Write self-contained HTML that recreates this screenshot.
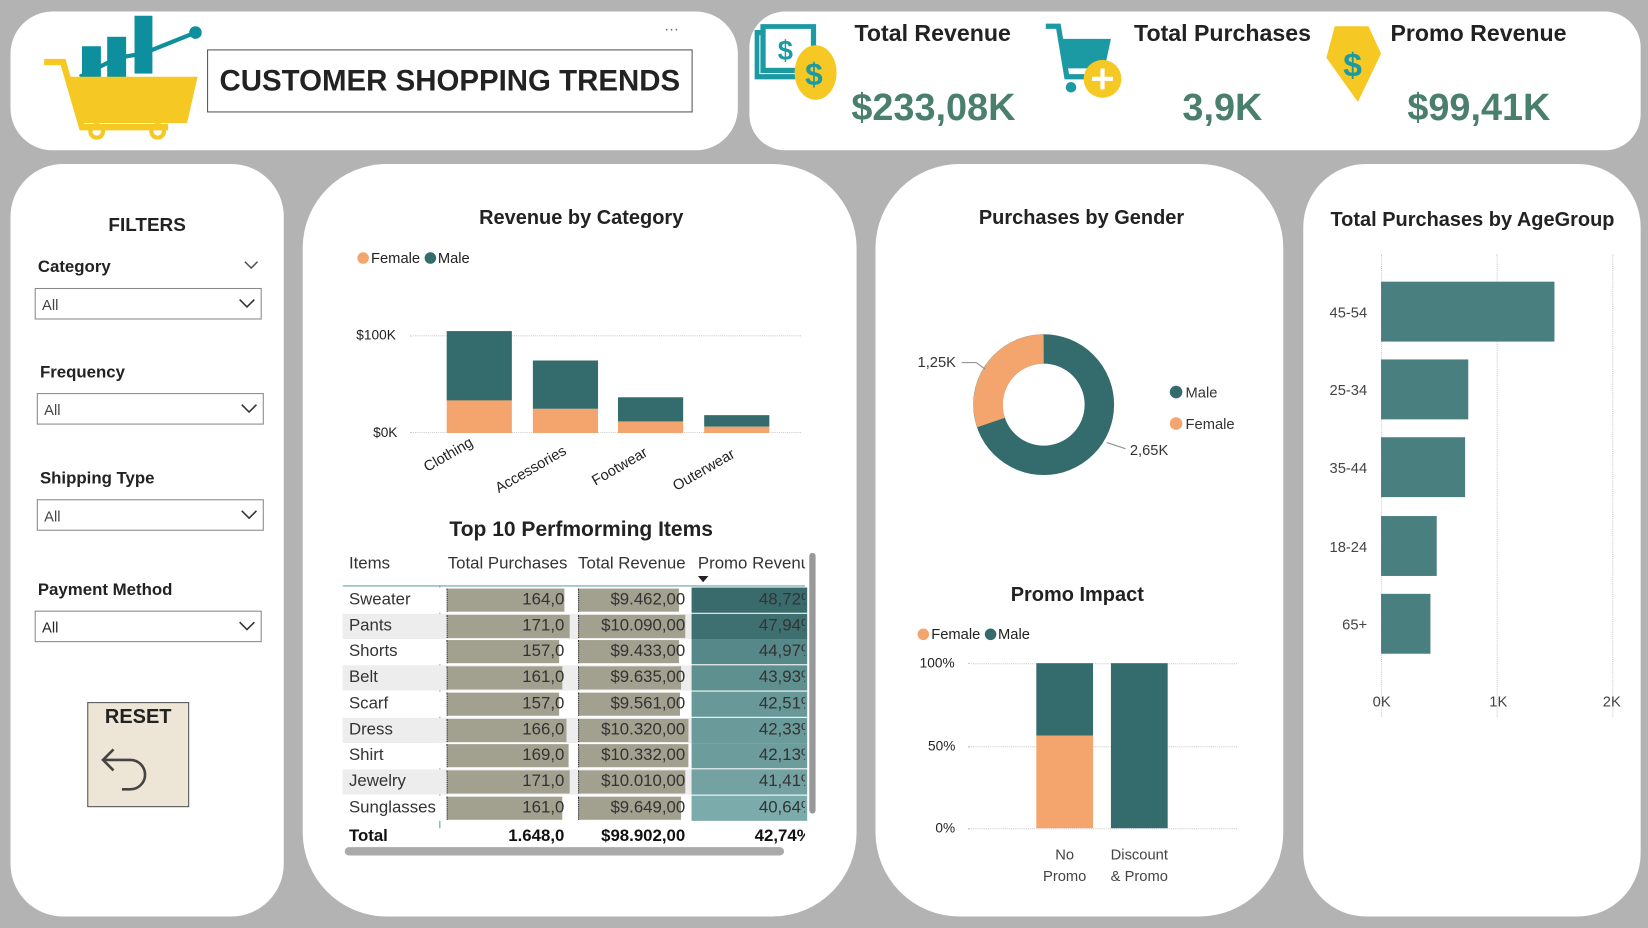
<!DOCTYPE html>
<html><head><meta charset="utf-8"><style>
*{margin:0;padding:0;box-sizing:border-box}
html,body{width:1648px;height:928px;overflow:hidden;background:#b3b3b3}
#w{position:absolute;left:0;top:0;width:1568px;height:883px;transform:scale(1.05102);transform-origin:0 0;font-family:"Liberation Sans","DejaVu Sans",sans-serif;color:#222}
.p{position:absolute;background:#fff}
.a{position:absolute}
.b{font-weight:bold}
.t{font-family:"Liberation Sans","DejaVu Sans",sans-serif;white-space:nowrap}
.sel{position:absolute;left:23px;width:216px;height:30px;border:1px solid #888;font-size:14px;color:#444;padding:7px 6px}
.sel svg{position:absolute;right:5px;top:9px}
.flab{position:absolute;font-size:16px;font-weight:bold}
.dot{display:inline-block;width:11px;height:11px;border-radius:50%;vertical-align:-1px;margin-right:2px}
</style></head><body><div id="w">

<!-- header -->
<div class="p" style="left:10px;top:11px;width:692px;height:132px;border-radius:40px">
  <svg class="a" style="left:30px;top:2px" width="152" height="120" viewBox="0 0 152 120">
    <rect x="38" y="31" width="18" height="40" fill="#0e8f9e"/>
    <rect x="62" y="22" width="18" height="40" fill="#0e8f9e"/>
    <rect x="88" y="2" width="17" height="55" fill="#0e8f9e"/>
    <polyline points="36,60 72,42 96,38 146,18" fill="none" stroke="#0e8f9e" stroke-width="4"/>
    <circle cx="72" cy="42" r="5" fill="#0e8f9e"/><circle cx="96" cy="38" r="5" fill="#0e8f9e"/><circle cx="146" cy="18" r="6" fill="#0e8f9e"/>
    <path d="M2 46 H20 L38 108 H120" fill="none" stroke="#f5c823" stroke-width="6"/>
    <polygon points="26,60 148,60 138,104 36,104" fill="#f5c823"/>
    <circle cx="52" cy="112" r="6" fill="none" stroke="#f5c823" stroke-width="4"/>
    <circle cx="110" cy="112" r="6" fill="none" stroke="#f5c823" stroke-width="4"/>
  </svg>
  <div class="a t b" style="left:187px;top:36px;width:462px;height:60px;border:1px solid #555;font-size:28px;text-align:center;line-height:58px;color:#222">CUSTOMER SHOPPING TRENDS</div>
  <div class="a" style="left:622px;top:8px;font-size:14px;color:#666">···</div>
</div>

<!-- KPIs -->
<div class="p" style="left:713px;top:11px;width:848px;height:132px;border-radius:34px">
  <svg class="a" style="left:5px;top:12px" width="80" height="75" viewBox="0 0 80 75">
    <rect x="2" y="8" width="48" height="42" fill="none" stroke="#1b9aa4" stroke-width="5"/>
    <rect x="8" y="2" width="48" height="42" fill="#fff" stroke="#1b9aa4" stroke-width="5"/>
    <text x="22" y="34" font-size="26" font-weight="bold" fill="#1b9aa4">$</text>
    <ellipse cx="58" cy="46" rx="20" ry="26" fill="#f5c823"/>
    <text x="48" y="58" font-size="30" font-weight="bold" fill="#1b9aa4">$</text>
  </svg>
  <div class="a t b" style="left:100px;top:8px;font-size:22px">Total Revenue</div>
  <div class="a t b" style="left:97px;top:70px;font-size:36px;color:#4a7f6e">$233,08K</div>
  <svg class="a" style="left:280px;top:10px" width="76" height="78" viewBox="0 0 76 78">
    <path d="M2 4 H14 L22 52 H58" fill="none" stroke="#1b9aa4" stroke-width="5"/>
    <polygon points="14,16 64,16 58,44 20,44" fill="#1b9aa4"/>
    <circle cx="26" cy="62" r="5" fill="#1b9aa4"/><circle cx="50" cy="62" r="5" fill="#1b9aa4"/>
    <circle cx="56" cy="54" r="18" fill="#f5c823"/>
    <path d="M56 44 V64 M46 54 H66" stroke="#fff" stroke-width="4"/>
  </svg>
  <div class="a t b" style="left:366px;top:8px;font-size:22px">Total Purchases</div>
  <div class="a t b" style="left:412px;top:70px;font-size:36px;color:#4a7f6e">3,9K</div>
  <svg class="a" style="left:545px;top:10px" width="60" height="78" viewBox="0 0 60 78">
    <polygon points="12,4 44,4 56,30 34,76 4,34" fill="#f5c823"/>
    <text x="20" y="52" font-size="32" font-weight="bold" fill="#1b9aa4">$</text>
  </svg>
  <div class="a t b" style="left:610px;top:8px;font-size:22px">Promo Revenue</div>
  <div class="a t b" style="left:626px;top:70px;font-size:36px;color:#4a7f6e">$99,41K</div>
</div>

<!-- filters -->
<div class="p" style="left:10px;top:156px;width:260px;height:716px;border-radius:50px">
  <div class="a t b" style="left:0;width:260px;text-align:center;top:48px;font-size:18px">FILTERS</div>
  <div class="flab t" style="left:26px;top:90px">Category</div>
  <svg class="a" style="left:222px;top:92px" width="14" height="9"><path d="M1 1 L7 7 L13 1" fill="none" stroke="#555" stroke-width="1.5"/></svg>
  <div class="sel" style="top:118px">All<svg width="16" height="9"><path d="M1 1 L8 8 L15 1" fill="none" stroke="#333" stroke-width="1.5"/></svg></div>
  <div class="flab t" style="left:28px;top:190px">Frequency</div>
  <div class="sel" style="top:218px;left:25px">All<svg width="16" height="9"><path d="M1 1 L8 8 L15 1" fill="none" stroke="#333" stroke-width="1.5"/></svg></div>
  <div class="flab t" style="left:28px;top:291px">Shipping Type</div>
  <div class="sel" style="top:319px;left:25px">All<svg width="16" height="9"><path d="M1 1 L8 8 L15 1" fill="none" stroke="#333" stroke-width="1.5"/></svg></div>
  <div class="flab t" style="left:26px;top:397px">Payment Method</div>
  <div class="sel" style="top:425px;color:#222">All<svg width="16" height="9"><path d="M1 1 L8 8 L15 1" fill="none" stroke="#333" stroke-width="1.5"/></svg></div>
  <div class="a" style="left:73px;top:512px;width:97px;height:100px;background:#ede5d5;border:1px solid #555">
    <div class="t b" style="text-align:center;font-size:19px;margin-top:3px">RESET</div>
    <svg class="a" style="left:10px;top:40px" width="50" height="50" viewBox="0 0 50 50"><path d="M4 14 H30 A14 14 0 0 1 30 42 H22" fill="none" stroke="#444" stroke-width="2.5"/><path d="M14 4 L4 14 L14 24" fill="none" stroke="#444" stroke-width="2.5"/></svg>
  </div>
</div>

<!-- middle -->
<div class="p" style="left:288px;top:156px;width:527px;height:716px;border-radius:80px">
  <div class="a t b" style="left:0;width:530px;text-align:center;top:41px;font-size:19px">Revenue by Category</div>
  <div class="a t" style="left:52px;top:81px;font-size:14px"><span class="dot" style="background:#f4a56e"></span>Female <span class="dot" style="background:#346b6c"></span>Male</div>
  <div class="a t" style="left:51px;top:155px;font-size:13px">$100K</div>
  <div class="a t" style="left:67px;top:248px;font-size:13px">$0K</div>
  <div class="a" style="left:102px;top:163px;width:372px;border-top:1px dotted #ccc"></div>
  <div class="a" style="left:102px;top:255px;width:372px;border-top:1px dotted #ccc"></div>
  <div class="a" style="left:137px;top:159px;width:62px;height:66px;background:#346b6c"></div>
  <div class="a" style="left:137px;top:225px;width:62px;height:31px;background:#f4a56e"></div>
  <div class="a" style="left:219px;top:187px;width:62px;height:46px;background:#346b6c"></div>
  <div class="a" style="left:219px;top:233px;width:62px;height:23px;background:#f4a56e"></div>
  <div class="a" style="left:300px;top:222px;width:62px;height:23px;background:#346b6c"></div>
  <div class="a" style="left:300px;top:245px;width:62px;height:11px;background:#f4a56e"></div>
  <div class="a" style="left:382px;top:239px;width:62px;height:11px;background:#346b6c"></div>
  <div class="a" style="left:382px;top:250px;width:62px;height:6px;background:#f4a56e"></div>
  <div class="a t" style="left:112px;top:282px;font-size:14px;transform:rotate(-30deg);transform-origin:left top">Clothing</div>
  <div class="a t" style="left:180px;top:302px;font-size:14px;transform:rotate(-30deg);transform-origin:left top">Accessories</div>
  <div class="a t" style="left:272px;top:295px;font-size:14px;transform:rotate(-30deg);transform-origin:left top">Footwear</div>
  <div class="a t" style="left:349px;top:300px;font-size:14px;transform:rotate(-30deg);transform-origin:left top">Outerwear</div>

  <div class="a t b" style="left:0;width:530px;text-align:center;top:337px;font-size:20px">Top 10 Perfmorming Items</div>
  <div class="a t" style="left:38px;top:368px;width:440px;height:264px;overflow:hidden;font-size:16px;color:#333">
    <div style="position:absolute;left:6px;top:4px">Items</div>
    <div style="position:absolute;left:100px;top:4px">Total Purchases</div>
    <div style="position:absolute;left:224px;top:4px">Total Revenue</div>
    <div style="position:absolute;left:338px;top:4px;white-space:nowrap">Promo Revenue</div>
    <div style="position:absolute;left:338px;top:24px;width:0;height:0;border:5px solid transparent;border-top:6px solid #222"></div>
    <div style="position:absolute;left:0;top:33px;width:440px;border-top:1.5px solid #5a9ea0"></div>
    <div style="position:absolute;left:92px;top:33px;height:248px;border-left:1.5px solid #5a9ea0"></div>
  </div>
  <div id="rows" class="a t" style="left:38px;top:403px;width:402px;font-size:16px;color:#333"></div>
  <div class="a" style="left:482px;top:370px;width:6px;height:248px;background:#999;border-radius:3px"></div>
  <div class="a" style="left:40px;top:650px;width:418px;height:8px;background:#aaa;border-radius:4px"></div>
</div>

<!-- gender -->
<div class="p" style="left:833px;top:156px;width:388px;height:716px;border-radius:80px">
  <div class="a t b" style="left:0;width:392px;text-align:center;top:41px;font-size:19px">Purchases by Gender</div>
  <svg class="a" style="left:30px;top:155px" width="330" height="160" viewBox="0 0 330 160">
   <g transform="translate(50,0)">
    <circle cx="80" cy="74" r="53" fill="none" stroke="#346b6c" stroke-width="28"/>
    <path d="M80 21 A53 53 0 0 0 30 91" fill="none" stroke="#f4a56e" stroke-width="28"/>
    <path d="M2 34 L16 34 L24 40" fill="none" stroke="#888"/>
    <path d="M140 110 L158 116" stroke="#888"/>
    <text x="-40" y="38" font-size="14" fill="#333" font-family="Liberation Sans">1,25K</text>
    <text x="162" y="122" font-size="14" fill="#333" font-family="Liberation Sans">2,65K</text>
    <circle cx="206" cy="62" r="6" fill="#346b6c"/><text x="215" y="67" font-size="14" fill="#333" font-family="Liberation Sans">Male</text>
    <circle cx="206" cy="92" r="6" fill="#f4a56e"/><text x="215" y="97" font-size="14" fill="#333" font-family="Liberation Sans">Female</text>
   </g>
  </svg>
  <div class="a t b" style="left:0;width:384px;text-align:center;top:400px;font-size:19px">Promo Impact</div>
  <div class="a t" style="left:40px;top:439px;font-size:14px"><span class="dot" style="background:#f4a56e"></span>Female <span class="dot" style="background:#346b6c"></span>Male</div>
  <div class="a t" style="left:42px;top:467px;font-size:13px">100%</div>
  <div class="a t" style="left:50px;top:546px;font-size:13px">50%</div>
  <div class="a t" style="left:57px;top:624px;font-size:13px">0%</div>
  <div class="a" style="left:88px;top:475px;width:256px;border-top:1px dotted #ccc"></div>
  <div class="a" style="left:88px;top:554px;width:256px;border-top:1px dotted #ccc"></div>
  <div class="a" style="left:88px;top:632px;width:256px;border-top:1px dotted #ccc"></div>
  <div class="a" style="left:153px;top:475px;width:54px;height:69px;background:#346b6c"></div>
  <div class="a" style="left:153px;top:544px;width:54px;height:88px;background:#f4a56e"></div>
  <div class="a" style="left:224px;top:475px;width:54px;height:157px;background:#346b6c"></div>
  <div class="a t" style="left:150px;top:647px;width:60px;text-align:center;font-size:14px;line-height:20px;color:#444">No<br>Promo</div>
  <div class="a t" style="left:216px;top:647px;width:70px;text-align:center;font-size:14px;line-height:20px;color:#444">Discount<br>&amp; Promo</div>
</div>

<!-- age -->
<div class="p" style="left:1240px;top:156px;width:321px;height:716px;border-radius:60px">
  <div class="a t b" style="left:0;width:322px;text-align:center;top:43px;font-size:19px">Total Purchases by AgeGroup</div>
  <div class="a" style="left:74px;top:86px;height:440px;border-left:1px dotted #ccc"></div>
  <div class="a" style="left:184px;top:86px;height:440px;border-left:1px dotted #ccc"></div>
  <div class="a" style="left:294px;top:86px;height:440px;border-left:1px dotted #ccc"></div>
  <div class="a" style="left:74px;top:112px;width:165px;height:57px;background:#4a7f80"></div>
  <div class="a" style="left:74px;top:186px;width:83px;height:57px;background:#4a7f80"></div>
  <div class="a" style="left:74px;top:260px;width:80px;height:57px;background:#4a7f80"></div>
  <div class="a" style="left:74px;top:335px;width:53px;height:57px;background:#4a7f80"></div>
  <div class="a" style="left:74px;top:409px;width:47px;height:57px;background:#4a7f80"></div>
  <div class="a t" style="left:25px;top:133px;font-size:14px;color:#444">45-54</div>
  <div class="a t" style="left:25px;top:207px;font-size:14px;color:#444">25-34</div>
  <div class="a t" style="left:25px;top:281px;font-size:14px;color:#444">35-44</div>
  <div class="a t" style="left:25px;top:356px;font-size:14px;color:#444">18-24</div>
  <div class="a t" style="left:37px;top:430px;font-size:14px;color:#444">65+</div>
  <div class="a t" style="left:66px;top:503px;font-size:14px;color:#444">0K</div>
  <div class="a t" style="left:177px;top:503px;font-size:14px;color:#444">1K</div>
  <div class="a t" style="left:285px;top:503px;font-size:14px;color:#444">2K</div>
</div>

</div>
<script>
var d=[["Sweater","164,0",112,"$9.462,00",96,"48,72%","#3a6b6c"],["Pants","171,0",117,"$10.090,00",102,"47,94%","#3f7071"],["Shorts","157,0",107,"$9.433,00",96,"44,97%","#568889"],["Belt","161,0",110,"$9.635,00",98,"43,93%","#5e9090"],["Scarf","157,0",107,"$9.561,00",97,"42,51%","#689898"],["Dress","166,0",114,"$10.320,00",105,"42,33%","#6a9a9a"],["Shirt","169,0",116,"$10.332,00",105,"42,13%","#6d9c9c"],["Jewelry","171,0",117,"$10.010,00",102,"41,41%","#74a2a2"],["Sunglasses","161,0",110,"$9.649,00",98,"40,64%","#7cabab"]];
var h="";d.forEach(function(r,i){var bg=i%2?"#ededed":"#fff";var y=i*24.7;
h+='<div style="position:absolute;left:0;top:'+y+'px;width:402px;height:24px;background:'+bg+'"></div>';
h+='<div style="position:absolute;left:6px;top:'+(y+3)+'px">'+r[0]+'</div>';
h+='<div style="position:absolute;left:99px;top:'+(y+1)+'px;width:'+r[2]+'px;height:22px;background:#a2a08f;border-left:1px dotted #333"></div>';
h+='<div style="position:absolute;left:99px;width:112px;text-align:right;top:'+(y+3)+'px">'+r[1]+'</div>';
h+='<div style="position:absolute;left:224px;top:'+(y+1)+'px;width:'+r[4]+'px;height:22px;background:#a2a08f;border-left:1px dotted #333"></div>';
h+='<div style="position:absolute;left:224px;width:102px;text-align:right;top:'+(y+3)+'px">'+r[3]+'</div>';
h+='<div style="position:absolute;left:332px;top:'+y+'px;width:110px;height:24px;background:'+r[6]+'"></div>';
h+='<div style="position:absolute;left:332px;width:108px;overflow:hidden;white-space:nowrap;text-align:left;padding-left:64px;top:'+(y+3)+'px">'+r[5]+'</div>';});
h+='<div style="position:absolute;left:6px;top:228px;font-weight:bold;color:#111">Total</div><div style="position:absolute;left:99px;width:112px;text-align:right;top:228px;font-weight:bold;color:#111">1.648,0</div><div style="position:absolute;left:224px;width:102px;text-align:right;top:228px;font-weight:bold;color:#111">$98.902,00</div><div style="position:absolute;left:332px;width:108px;overflow:hidden;white-space:nowrap;padding-left:60px;top:228px;font-weight:bold;color:#111">42,74%</div>';
document.getElementById("rows").innerHTML=h;
</script>
</body></html>
